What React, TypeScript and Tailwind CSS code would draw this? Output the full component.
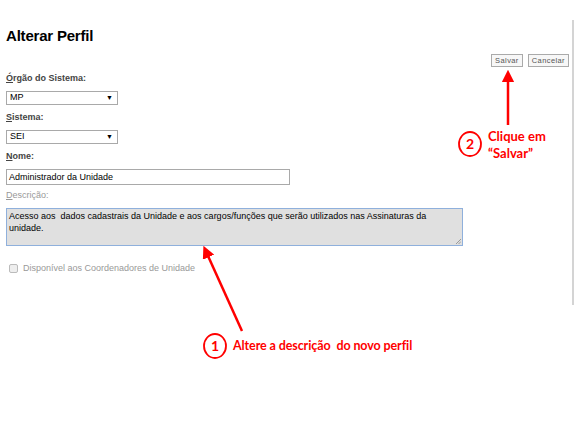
import React from 'react';

const Label = ({ first, rest, muted }: { first: string; rest: string; muted?: boolean }) => (
  <div className={`h-[12px] leading-[12px] text-[9px] ${muted ? 'text-[#999]' : 'font-bold text-[#444]'}`}>
    <span className="underline decoration-[1px] underline-offset-[1px]">{first}</span>
    {rest}
  </div>
);

const FakeSelect = ({ value }: { value: string }) => (
  <div className="w-[112px] h-[14px] border border-[#a9a9a9] bg-white flex items-center justify-between pl-[3px] pr-[4px] text-[9px] text-black">
    <span>{value}</span>
    <span className="text-[7px]">▼</span>
  </div>
);

export default function App() {
  return (
    <div className="relative w-[580px] h-[439px] bg-white overflow-hidden font-['Liberation_Sans',Arial,sans-serif]">
      {/* form area, the grey rule on the right is its border */}
      <div className="mt-[20px] w-[574px] h-[285px] border-r-2 border-[#d4d4d4] pl-[6px] pt-[7px]">
        <h1 className="text-[15px] leading-[18px] font-bold text-black tracking-[-0.2px]">Alterar Perfil</h1>

        <div className="flex justify-end gap-[5px] mt-[9px] pr-[3px]">
          <button className="h-[13px] px-[3px] border border-[#aaa] bg-[#f7f7f7] text-[7.5px] leading-[11px] tracking-[0.4px] text-[#555]">Salvar</button>
          <button className="h-[13px] px-[3px] border border-[#aaa] bg-[#f7f7f7] text-[7.5px] leading-[11px] tracking-[0.4px] text-[#555]">Cancelar</button>
        </div>

        <div className="mt-[5px] flex flex-col">
          <Label first="Ó" rest="rgão do Sistema:" />
          <div className="mt-[7px]"><FakeSelect value="MP" /></div>

          <div className="mt-[6px]"><Label first="S" rest="istema:" /></div>
          <div className="mt-[7px]"><FakeSelect value="SEI" /></div>

          <div className="mt-[6px]"><Label first="N" rest="ome:" /></div>
          <div className="mt-[7px] w-[284px] h-[16px] border border-[#a9a9a9] bg-white px-[2px] text-[9px] leading-[14px] text-black">
            Administrador da Unidade
          </div>

          <div className="mt-[4px]"><Label first="D" rest="escrição:" muted /></div>
          <div className="relative mt-[7px] w-[457px] h-[38px] border border-[#8fb0dc] bg-[#e0e0e0] px-[2px] pt-[1px] text-[9px] leading-[12px] text-black whitespace-pre-wrap">
            {'Acesso aos  dados cadastrais da Unidade e aos cargos/funções que serão utilizados nas Assinaturas da\nunidade.'}
            <svg className="absolute right-[1px] bottom-[1px]" width="6" height="6" viewBox="0 0 6 6">
              <path d="M1 6 L6 1 M3.5 6 L6 3.5" stroke="#888" strokeWidth="0.8" />
            </svg>
          </div>

          <div className="mt-[16px] flex items-center gap-[5px] pl-[3px]">
            <div className="w-[9px] h-[9px] rounded-[2px] border border-[#bbb] bg-[#eee]" />
            <span className="text-[9px] text-[#999]">Disponível aos Coordenadores de Unidade</span>
          </div>
        </div>
      </div>

      {/* annotations */}
      <svg className="absolute left-0 top-0 pointer-events-none" width="580" height="439">
        <defs>
          <marker id="head" markerWidth="5" markerHeight="5" refX="2.5" refY="2.5" orient="auto" markerUnits="strokeWidth">
            <path d="M0 0 L5 2.5 L0 5 z" fill="#ff0000" />
          </marker>
        </defs>
        <line x1="242" y1="331" x2="206" y2="251.5" stroke="#ff0000" strokeWidth="2.5" markerEnd="url(#head)" />
        <line x1="508" y1="125" x2="508" y2="76" stroke="#ff0000" strokeWidth="2.5" markerEnd="url(#head)" />
        <ellipse cx="215" cy="346" rx="11" ry="12" fill="white" stroke="#ff0000" strokeWidth="1.8" />
        <ellipse cx="470" cy="144" rx="11" ry="12" fill="white" stroke="#ff0000" strokeWidth="1.8" />
      </svg>
      <div className="absolute left-[209px] top-[337px] w-[12px] text-center text-[14px] leading-[18px] font-bold text-[#ff0000] font-['Lato',sans-serif]">1</div>
      <div className="absolute left-[464px] top-[135px] w-[12px] text-center text-[14px] leading-[18px] font-bold text-[#ff0000] font-['Lato',sans-serif]">2</div>
      <div className="absolute left-[233px] top-[338px] text-[12.5px] leading-[16px] font-bold text-[#ff0000] font-['Lato',sans-serif] whitespace-pre tracking-[-0.1px]">Altere a descrição  do novo perfil</div>
      <div className="absolute left-[488px] top-[128px] text-[13px] leading-[17px] font-bold text-[#ff0000] font-['Lato',sans-serif]">
        Clique em<br />“Salvar”
      </div>
    </div>
  );
}
